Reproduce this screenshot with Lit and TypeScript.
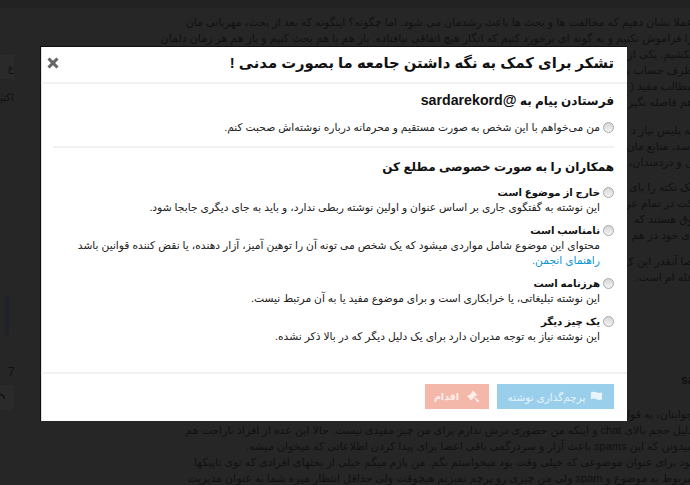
import { LitElement, html, css } from "lit";
import { customElement } from "lit/decorators.js";

const bgTop = [
  "عملا نشان دهیم که مخالفت ها و بحث ها باعث رشدمان می شود. اما چگونه؟ اینگونه که بعد از بحث، مهربانی مان",
  "را فراموش نکنیم و به گونه ای برخورد کنیم که انگار هیچ اتفاقی نیافتاده. باز هم با هم بحث کنیم و باز هم هر زمان دلمان",
  "بکشیم. یکی از",
  "طرف حساب بزند",
  "مطالب مفید (",
  "هم فاصله نگیر",
];
const bgMid = ["به پلیس نیاز د", "اسد، منابع مان", "ن و دردمندان،"];
const bgMid2 = ["یک نکته را بای", "کت در تمام عر", "وق هستند که", "ای خود در هم"];
const bgMid3 = ["صا آنقدر این ک", "غله ام است."];
const bgBottom = [
  "دلیل حجم بالای chat و اینکه من حضوری درش ندارم برای من چیز مفیدی نیست. حالا این عده از افراد ناراحت هم",
  "میدونن که این spams باعث آزار و سردرگمی باقی اعضا برای پیدا کردن اطلاعاتی که میخوان میشه.",
  "بود برای عنوان موضوعی که خیلی وقت بود میخواستم بگم. من بازم میگم خیلی از بحثهای افرادی که توی تاپیکها",
  "مربوط به موضوع و spam ولی من چیزی رو پرچم نمیزنم هیچوقت ولی حداقل انتظار میره شما به عنوان مدیریت",
];

@customElement("app-root")
export class AppRoot extends LitElement {
  static styles = css`
    :host {
      display: block;
      position: relative;
      width: 690px;
      height: 485px;
      overflow: hidden;
      background: #262626;
      font-family: "Liberation Sans", "DejaVu Sans", sans-serif;
    }
    .page {
      height: 485px;
      display: grid;
      grid-template-columns: 15px 1fr;
      color: #111;
    }
    .topbar { height: 8px; background: #222; position: absolute; top: 0; left: 0; right: 0; }
    .side {
      display: flex;
      flex-direction: column;
      font-size: 10.5px;
      overflow: hidden;
      padding-top: 55px;
    }
    .side .box { height: 24px; background: #2a2a2a; width: 14px; flex: none; overflow: hidden; line-height: 24px; direction: rtl; white-space: nowrap; }
    .side .act { margin-top: 10px; height: 16px; line-height: 16px; white-space: nowrap; direction: rtl; width: 14px; overflow: hidden; }
    .side .bar { margin: 190px 0 0 5px; width: 4px; height: 40px; background: #1e2226; flex: none; }
    .side .time { margin-top: 29px; padding-left: 8px; height: 16px; line-height: 16px; white-space: nowrap; font-size: 12px; }
    .side .box2 { margin-top: 5px; height: 25px; background: #2a2a2a; width: 14px; flex: none; }
    .side .box2 svg { display: block; width: 6px; height: 25px; }
    .main {
      direction: rtl;
      display: flex;
      flex-direction: column;
      padding-top: 14px;
      margin-right: -3px;
      font-size: 11px;
      line-height: 16px;
      overflow: hidden;
    }
    .l { white-space: nowrap; height: 16px; }
    .g1 { margin-top: 12px; }
    .g2 { margin-top: 9px; }
    .g3 { margin-top: 10px; }
    .sa { height: 16px; margin-top: 87px; padding-left: 666px; direction: ltr; font-size: 12px; font-weight: bold; white-space: nowrap; }
    .lead { margin-top: 18px; }
    .backdrop { position: absolute; inset: 0; pointer-events: none; }
    .modal {
      position: absolute;
      left: 40px;
      top: 46px;
      width: 587px;
      height: 375px;
      box-sizing: border-box;
      background: #fff;
      border-top: 1px solid #111;
      border-left: 1px solid #111;
      box-shadow: inset 1px 0 0 #ddd;
      display: flex;
      flex-direction: column;
      direction: rtl;
      color: #222;
    }
    .head {
      height: 35px;
      box-sizing: content-box;
      flex: none;
      border-bottom: 2px solid #f1f1f1;
      display: flex;
      align-items: center;
      justify-content: space-between;
      padding: 0 13px 0 6px;
    }
    .head h3 { margin: 0 0 3px; font-size: 14.8px; font-weight: 700; color: #111; line-height: 30px; white-space: nowrap; }
    .close { width: 12px; height: 12px; display: block; margin-bottom: 3px; }
    .body {
      flex: 1;
      padding: 0 13px;
      display: flex;
      flex-direction: column;
    }
    h4 { margin: 0; font-size: 12px; font-weight: 700; color: #111; line-height: 20px; white-space: nowrap; }
    .h1 { margin-top: 6px; }
    .h1 span { font-size: 14.2px; line-height: 20px; }
    .row { display: flex; gap: 3px; align-items: flex-start; }
    .radio {
      appearance: none;
      flex: none;
      width: 11px;
      height: 11px;
      margin: 2px 0 0 0;
      border-radius: 50%;
      border: 1px solid #a9a9a9;
      box-sizing: border-box;
      background: linear-gradient(#d6d6d6, #f4f4f4);
    }
    .txt { font-size: 10.7px; line-height: 15px; color: #222; white-space: nowrap; }
    .txt b { display: block; color: #111; font-size: 10.2px; font-weight: 700; }
    .first { margin-top: 9px; }
    hr { border: 0; height: 2px; background: #f1f1f1; margin: 11px 0 9px; width: 561px; }
    .item { margin-top: 8px; }
    a { color: #0e95d9; text-decoration: none; }
    .foot {
      height: 49px;
      flex: none;
      border-top: 2px solid #f1f1f1;
      display: flex;
      gap: 8px;
      padding: 10px 13px 0;
      box-sizing: border-box;
      align-items: flex-start;
    }
    .btn {
      height: 25px;
      display: flex;
      align-items: center;
      justify-content: center;
      gap: 5px;
      font: inherit;
      font-size: 10.5px;
      color: #e6f3fa;
      border: 0;
      padding: 0;
      white-space: nowrap;
    }
    .blue { width: 117px; background: #9acfec; }
    .red { width: 64px; background: #f4b8ab; color: #fdeeea; font-weight: 700; font-size: 9.5px; gap: 8px; }
    .btn svg { display: block; width: 13px; height: 13px; flex: none; }
  `;

  render() {
    return html`
      <div class="page">
        <div class="topbar"></div>
        <div class="side">
          <div class="box">ع</div>
          <div class="act">اکتیو</div>
          <div class="bar"></div>
          <div class="time">7 د</div>
          <div class="box2"><svg viewBox="0 0 6 25"><path d="M0 9.5A4 4 0 0 1 4 13.5" fill="none" stroke="#111" stroke-width="1.6"/></svg></div>
        </div>
        <div class="main">
          <div>${bgTop.map((l) => html`<div class="l">${l}</div>`)}</div>
          <div class="g1">${bgMid.map((l) => html`<div class="l">${l}</div>`)}</div>
          <div class="g2">${bgMid2.map((l) => html`<div class="l">${l}</div>`)}</div>
          <div class="g3">${bgMid3.map((l) => html`<div class="l">${l}</div>`)}</div>
          <div class="sa">sa</div>
          <div class="l lead">جوابتان، به قول</div>
          ${bgBottom.map((l) => html`<div class="l">${l}</div>`)}
        </div>
      </div>
      <div class="backdrop">
        <div class="modal">
          <div class="head">
            <h3>تشکر برای کمک به نگه داشتن جامعه ما بصورت مدنی !</h3>
            <svg class="close" viewBox="0 0 14 14"><path d="M3 .5 7 4.5 11 .5 13.5 3 9.5 7 13.5 11 11 13.5 7 9.5 3 13.5 .5 11 4.5 7 .5 3Z" fill="#666"/></svg>
          </div>
          <div class="body">
            <h4 class="h1">فرستادن پیام به <span>@sardarekord</span></h4>
            <div class="row first">
              <input type="radio" class="radio" name="r1" />
              <div class="txt">من می‌خواهم با این شخص به صورت مستقیم و محرمانه درباره نوشته‌اش صحبت کنم.</div>
            </div>
            <hr />
            <h4 class="h2">همکاران را به صورت خصوصی مطلع کن</h4>
            <div class="row item">
              <input type="radio" class="radio" name="r2" />
              <div class="txt"><b>خارج از موضوع است</b>این نوشته به گفتگوی جاری بر اساس عنوان و اولین نوشته ربطی ندارد، و باید به جای دیگری جابجا شود.</div>
            </div>
            <div class="row item">
              <input type="radio" class="radio" name="r2" />
              <div class="txt"><b>نامناسب است</b>محتوای این موضوع شامل مواردی میشود که یک شخص می تونه آن را توهین آمیز، آزار دهنده، یا نقض کننده قوانین باشد<br /><a>راهنمای انجمن.</a></div>
            </div>
            <div class="row item">
              <input type="radio" class="radio" name="r2" />
              <div class="txt"><b>هرزنامه است</b>این نوشته تبلیغاتی، یا خرابکاری است و برای موضوع مفید یا به آن مرتبط نیست.</div>
            </div>
            <div class="row item">
              <input type="radio" class="radio" name="r2" />
              <div class="txt"><b>یک چیز دیگر</b>این نوشته نیاز به توجه مدیران دارد برای یک دلیل دیگر که در بالا ذکر نشده.</div>
            </div>
          </div>
          <div class="foot">
            <button class="btn blue">
              <svg viewBox="0 0 14 14"><path d="M1 2.5C3 1.5 5 1.5 7 2.5S11 3.5 13 2.5V10C11 11 9 11 7 10S3 9 1 10Z" fill="#eaf5fb"/></svg>
              <span>پرچم‌گذاری نوشته</span>
            </button>
            <button class="btn red">
              <svg viewBox="0 0 14 14"><path d="M6.5 .5 11 5 9.3 6.7 8.7 6.1 7.6 7.2 13.4 11.6 11.6 13.4 7 7.8 5.9 8.9 6.5 9.5 4.8 11.2.3 6.7 2 5 2.6 5.6 5.4 2.8 4.8 2.2Z" fill="#fdeeea"/></svg>
              <span>اقدام</span>
            </button>
          </div>
        </div>
      </div>
    `;
  }
}
